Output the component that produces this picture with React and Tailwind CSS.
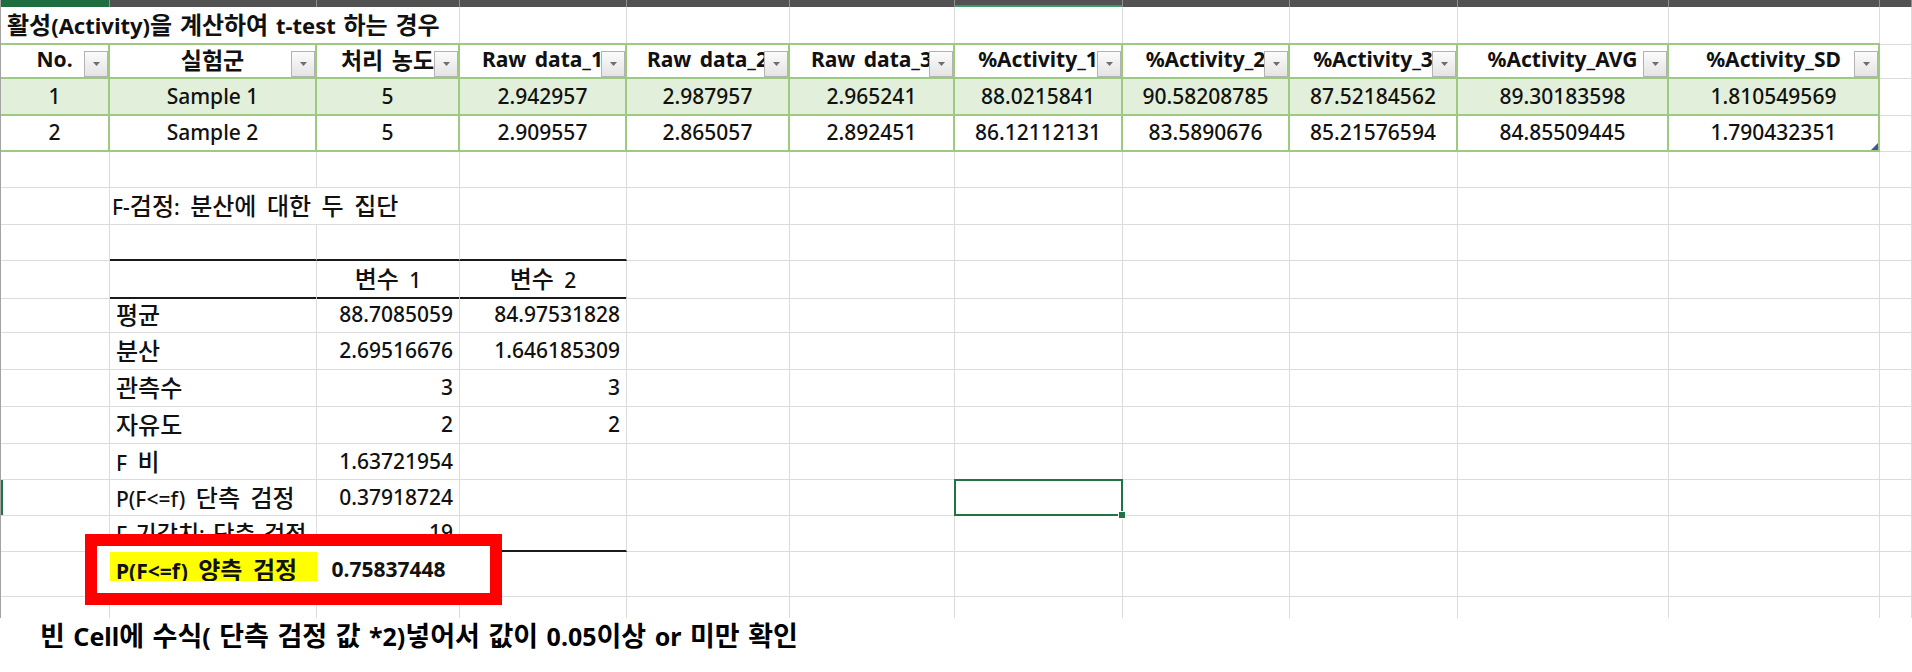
import React from "react";

const GRID =
  "grid grid-cols-[109px_207px_143px_167px_163px_165px_168px_167px_168px_211px_211px_32px]";
const GC = "border-r border-b border-[#dcdcdc]";
const GCNB = "border-r border-[#dcdcdc]";
const TC = "border-r-2 border-b-2 border-[#9dca80]";
const BLK = "border-r border-r-[#dcdcdc] border-b-2 border-b-[#1a1a1a]";

const headers = [
  "No.",
  "실험군",
  "처리 농도",
  "Raw data_1",
  "Raw data_2",
  "Raw data_3",
  "%Activity_1",
  "%Activity_2",
  "%Activity_3",
  "%Activity_AVG",
  "%Activity_SD",
];

const data = [
  ["1", "Sample 1", "5", "2.942957", "2.987957", "2.965241", "88.0215841", "90.58208785", "87.52184562", "89.30183598", "1.810549569"],
  ["2", "Sample 2", "5", "2.909557", "2.865057", "2.892451", "86.12112131", "83.5890676", "85.21576594", "84.85509445", "1.790432351"],
];

const stats = [
  ["평균", "88.7085059", "84.97531828", "h-[35px]"],
  ["분산", "2.69516676", "1.646185309", "h-[37px]"],
  ["관측수", "3", "3", "h-[37px]"],
  ["자유도", "2", "2", "h-[37px]"],
  ["F 비", "1.63721954", "", "h-[36px]"],
  ["P(F<=f) 단측 검정", "0.37918724", "", "h-[36px]"],
];

const HANGUL = /([\uAC00-\uD7A3]+)/;

// Renders text with Hangul runs in a larger size (to mimic Malgun Gothic proportions)
function KR({ t, k = "text-[24px]", cls = "[word-spacing:5px]" }) {
  const parts = t.split(HANGUL);
  return (
    <span className={cls}>
      {parts.map((p, i) =>
        /[\uAC00-\uD7A3]/.test(p) ? (
          <span key={i} className={k}>
            {p}
          </span>
        ) : (
          <React.Fragment key={i}>{p}</React.Fragment>
        )
      )}
    </span>
  );
}

function Empty({ n, cls = GC }) {
  return (
    <>
      {Array.from({ length: n }, (_, i) => (
        <div key={i} className={cls} />
      ))}
    </>
  );
}

function Row({ h, children }) {
  return <div className={`${GRID} ${h}`}>{children}</div>;
}

function FilterBtn() {
  return (
    <div className="absolute right-0 bottom-0 w-[24px] h-[26px] border border-[#b3b3b3] bg-gradient-to-b from-[#fbfbfb] to-[#e4e4e4] flex items-center justify-center">
      <svg width="7" height="4" viewBox="0 0 7 4">
        <path d="M0 0h7L3.5 4z" fill="#6e6e6e" />
      </svg>
    </div>
  );
}

export default function App() {
  return (
    <div className="relative w-[1912px] h-[672px] bg-white overflow-hidden text-[#111111] font-medium font-[family-name:'Noto_Sans','Noto_Sans_CJK_KR',sans-serif]">
      <div className="border-l border-[#a3a3a3]">
        {/* column header strip */}
        <Row h="h-[7px]">
          <div className="bg-[#1f6e40] border-r border-[#8f8f8f]" />
          {Array.from({ length: 11 }, (_, i) =>
            i === 5 ? (
              <div key={i} className="bg-[#525252] border-r border-[#8f8f8f] shadow-[inset_0_-2px_0_#3a9a62]" />
            ) : (
              <div key={i} className="bg-[#525252] border-r border-[#8f8f8f]" />
            )
          )}
        </Row>

        {/* title row */}
        <Row h="h-[36px]">
          <div className="col-span-3 border-r border-r-[#dcdcdc] border-b-2 border-b-[#9dca80] flex items-center pl-[6px] text-[22px] font-bold whitespace-nowrap">
            <KR t="활성(Activity)을 계산하여 t-test 하는 경우" k="text-[24px]" cls="[word-spacing:2px]" />
          </div>
          <Empty n={8} cls="border-r border-r-[#dcdcdc] border-b-2 border-b-[#9dca80]" />
          <div className={GC} />
        </Row>

        {/* header row */}
        <Row h="h-[36px]">
          {headers.map((h) => (
            <div key={h} className={`relative overflow-hidden flex items-center justify-center text-[21px] font-bold whitespace-nowrap ${TC}`}>
              <KR t={h} k="text-[23px]" cls="[word-spacing:3px]" />
              <FilterBtn />
            </div>
          ))}
          <div className={GC} />
        </Row>

        {/* data rows */}
        {data.map((r, ri) => (
          <Row key={ri} h={ri === 0 ? "h-[37px]" : "h-[36px]"}>
            {r.map((v, ci) => (
              <div
                key={ci}
                className={`relative flex items-center justify-center text-[21px] whitespace-nowrap ${TC} ${ri === 0 ? "bg-[#e2efda]" : ""}`}
              >
                {v}
                {ri === 1 && ci === 10 && (
                  <svg className="absolute right-0 bottom-0" width="7" height="7" viewBox="0 0 7 7">
                    <path d="M7 0V7H0z" fill="#41579c" />
                  </svg>
                )}
              </div>
            ))}
            <div className={GC} />
          </Row>
        ))}

        {/* blank */}
        <Row h="h-[36px]">
          <Empty n={12} />
        </Row>

        {/* F-test title */}
        <Row h="h-[36px]">
          <div className={GC} />
          <div className={`col-span-2 ${GC} flex items-center pl-[2px] text-[21px] whitespace-nowrap`}>
            <KR t="F-검정: 분산에 대한 두 집단" />
          </div>
          <Empty n={9} />
        </Row>

        {/* blank with black bottom */}
        <Row h="h-[37px]">
          <div className={GC} />
          <Empty n={3} cls={BLK} />
          <Empty n={8} />
        </Row>

        {/* 변수 header */}
        <Row h="h-[37px]">
          <div className={GC} />
          <div className={BLK} />
          <div className={`${BLK} flex items-center justify-center text-[21px]`}>
            <KR t="변수 1" />
          </div>
          <div className={`${BLK} flex items-center justify-center text-[21px]`}>
            <KR t="변수 2" />
          </div>
          <Empty n={8} />
        </Row>

        {/* stats */}
        {stats.map(([label, v1, v2, h], si) => (
          <Row key={label} h={h}>
            <div className={`${GC} ${si === 5 ? "shadow-[inset_2px_0_0_#217346]" : ""}`} />
            <div className={`${GC} flex items-center pl-[6px] text-[21px] whitespace-nowrap overflow-hidden`}>
              <KR t={label} />
            </div>
            <div className={`${GC} flex items-center justify-end pr-[6px] text-[21px]`}>{v1}</div>
            <div className={`${GC} flex items-center justify-end pr-[6px] text-[21px]`}>{v2}</div>
            <Empty n={2} />
            {si === 5 ? (
              <div className={`${GC} relative`}>
                <div className="absolute inset-[-1px] border-2 border-[#217346] z-10">
                  <div className="absolute right-[-5px] bottom-[-5px] w-[8px] h-[8px] bg-[#217346] border border-white" />
                </div>
              </div>
            ) : (
              <div className={GC} />
            )}
            <Empty n={5} />
          </Row>
        ))}

        {/* F 기각치 */}
        <Row h="h-[36px]">
          <div className={GC} />
          <div className={`${BLK} flex items-center pl-[6px] text-[21px] whitespace-nowrap overflow-hidden`}>
            <KR t="F 기각치: 단측 검정" k="text-[23px]" cls="[word-spacing:3px]" />
          </div>
          <div className={`${BLK} flex items-center justify-end pr-[6px] text-[21px]`}>19</div>
          <div className={BLK} />
          <Empty n={8} />
        </Row>

        {/* 양측 */}
        <Row h="h-[37px]">
          <div className={GC} />
          <div className="bg-[#ffff00] border-b border-[#dcdcdc] flex items-center pl-[6px] pb-[8px] text-[21px] font-bold whitespace-nowrap">
            <KR t="P(F<=f) 양측 검정" />
          </div>
          <div className="border-b border-[#dcdcdc] flex items-center justify-center pb-[8px] text-[21px] font-bold">0.75837448</div>
          <Empty n={9} />
        </Row>

        {/* last partial row */}
        <Row h="h-[29px]">
          <Empty n={12} cls={GCNB} />
        </Row>
      </div>

      <div className="h-[36px] pl-[40px] leading-[36px] text-[25px] font-bold text-black whitespace-nowrap">
        <KR t="빈 Cell에 수식( 단측 검정 값 *2)넣어서 값이 0.05이상 or 미만 확인" k="text-[27px]" cls="[word-spacing:2px]" />
      </div>

      {/* red annotation box */}
      <div className="absolute left-[85px] top-[534px] w-[417px] h-[71px] border-[12px] border-[#ff0000] z-20">
        <div className="w-full h-full border-t-[6px] border-r-[6px] border-b-[12px] border-l-[13px] border-white" />
      </div>
    </div>
  );
}
